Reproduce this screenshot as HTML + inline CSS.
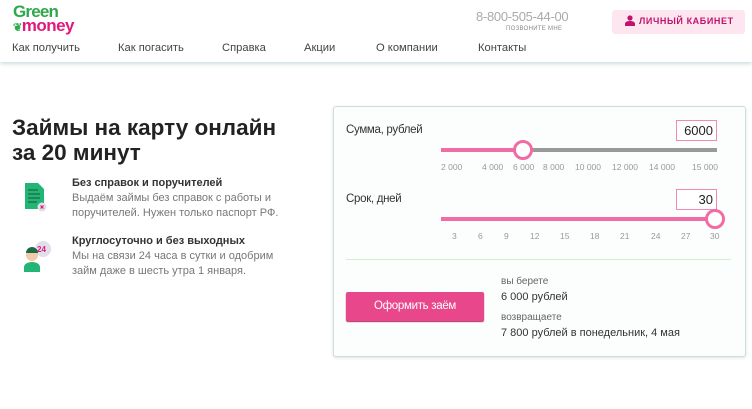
<!DOCTYPE html>
<html><head><meta charset="utf-8"><style>
*{margin:0;padding:0;box-sizing:border-box}
body{width:752px;height:409px;background:#fff;font-family:"Liberation Sans",sans-serif;position:relative;overflow:hidden;color:#333}
.a{position:absolute;white-space:nowrap}
.hdr{position:absolute;left:0;top:0;width:752px;height:62px;background:#fff;box-shadow:0 2px 4px rgba(150,180,190,.45)}
.nav{font-size:11.2px;color:#444;top:42px}
.tick{font-size:8.5px;color:#999;top:162px}
.tick2{font-size:8.5px;color:#999;top:231px}
.ft{font-size:11px;font-weight:bold;color:#333}
.fd{font-size:11px;color:#777;line-height:15px}
</style></head><body>
<div class="hdr"></div>
<div class="a" style="left:13px;top:4px;font-size:17px;font-weight:bold;color:#2ea84a;line-height:15px;letter-spacing:-0.8px">Green</div>
<div class="a" style="left:13px;top:18px;font-size:17px;font-weight:bold;color:#e0197d;line-height:16px;letter-spacing:-0.5px"><span style="color:#2ea84a;font-size:11px">❦</span>money</div>
<div class="a nav" style="left:12px">Как получить</div>
<div class="a nav" style="left:118px">Как погасить</div>
<div class="a nav" style="left:222px">Справка</div>
<div class="a nav" style="left:304px">Акции</div>
<div class="a nav" style="left:376px">О компании</div>
<div class="a nav" style="left:478px">Контакты</div>
<div class="a" style="left:476px;top:9px;font-size:13px;color:#aaa;letter-spacing:-0.3px">8-800-505-44-00</div>
<div class="a" style="left:506px;top:26px;font-size:6px;color:#888;letter-spacing:.3px">ПОЗВОНИТЕ МНЕ</div>
<div class="a" style="left:612px;top:10px;width:133px;height:24px;background:#fde6f0;border-radius:3px"></div>
<svg class="a" style="left:625px;top:15px" width="10" height="11" viewBox="0 0 10 11"><circle cx="5" cy="3" r="2.6" fill="#c0146b"/><path d="M0 11V9c0-2 2-3 5-3s5 1 5 3v2z" fill="#c0146b"/></svg>
<div class="a" style="left:639px;top:16px;font-size:9px;font-weight:bold;color:#c0146b;letter-spacing:.6px">ЛИЧНЫЙ КАБИНЕТ</div>

<div class="a" style="left:12px;top:115px;font-size:22.5px;font-weight:bold;color:#222;line-height:25px">Займы на карту онлайн<br>за 20 минут</div>

<svg class="a" style="left:24px;top:182px" width="24" height="30" viewBox="0 0 24 30"><path d="M1 1h13l6 6v20H1z" fill="#23b573"/><path d="M4 8h10M4 12h12M4 16h12M4 20h9" stroke="#1a6b4a" stroke-width="1.2"/><circle cx="18" cy="25" r="4.5" fill="#e0e0ea"/><path d="M16.5 23.5l3 3M19.5 23.5l-3 3" stroke="#e0197d" stroke-width="1.2"/></svg>
<div class="a ft" style="left:72px;top:177px">Без справок и поручителей</div>
<div class="a fd" style="left:72px;top:191px">Выдаём займы без справок с работы и<br>поручителей. Нужен только паспорт РФ.</div>
<svg class="a" style="left:22px;top:240px" width="30" height="32" viewBox="0 0 30 32"><circle cx="21" cy="9" r="8" fill="#e0e0ea"/><text x="15" y="12" font-size="8" font-weight="bold" fill="#e0197d" font-family="Liberation Sans">24</text><circle cx="10" cy="15" r="6" fill="#f3c9a6"/><path d="M4 13a6 6 0 0112 0" fill="#1a6b4a"/><path d="M2 32v-5c0-3 4-5 8-5s8 2 8 5v5z" fill="#23b573"/></svg>
<div class="a ft" style="left:72px;top:235px">Круглосуточно и без выходных</div>
<div class="a fd" style="left:72px;top:249px">Мы на связи 24 часа в сутки и одобрим<br>займ даже в шесть утра 1 января.</div>

<div class="a" style="left:333px;top:106px;width:413px;height:251px;border:1px solid #cfdde3;border-radius:3px;background:#fcfdfd;box-shadow:0 1px 3px rgba(0,0,0,.12)"></div>
<div class="a" style="left:346px;top:124px;font-size:11.5px;color:#333;letter-spacing:-0.3px">Сумма, рублей</div>
<div class="a" style="left:676px;top:120px;width:41px;height:21px;border:1px solid #f08ab5;background:#fff;font-size:13px;text-align:right;padding:2px 3px 0 0;color:#222">6000</div>
<div class="a" style="left:441px;top:148px;width:82px;height:4px;background:#f06ca5"></div>
<div class="a" style="left:523px;top:148px;width:194px;height:4px;background:#999"></div>
<div class="a" style="left:513px;top:140px;width:20px;height:20px;border:3px solid #f06ca5;border-radius:50%;background:#fff"></div>
<div class="a tick" style="left:441px">2 000</div><div class="a tick" style="left:482px">4 000</div><div class="a tick" style="left:513px">6 000</div><div class="a tick" style="left:543px">8 000</div><div class="a tick" style="left:575px">10 000</div><div class="a tick" style="left:612px">12 000</div><div class="a tick" style="left:649px">14 000</div><div class="a tick" style="left:692px">15 000</div>
<div class="a" style="left:346px;top:193px;font-size:11.5px;color:#333;letter-spacing:-0.3px">Срок, дней</div>
<div class="a" style="left:676px;top:189px;width:41px;height:21px;border:1px solid #f08ab5;background:#fff;font-size:13px;text-align:right;padding:2px 3px 0 0;color:#222">30</div>
<div class="a" style="left:441px;top:217px;width:274px;height:4px;background:#f06ca5"></div>
<div class="a" style="left:705px;top:209px;width:20px;height:20px;border:3px solid #f06ca5;border-radius:50%;background:#fff"></div>
<div class="a tick2" style="left:452px">3</div><div class="a tick2" style="left:478px">6</div><div class="a tick2" style="left:504px">9</div><div class="a tick2" style="left:530px">12</div><div class="a tick2" style="left:560px">15</div><div class="a tick2" style="left:590px">18</div><div class="a tick2" style="left:620px">21</div><div class="a tick2" style="left:651px">24</div><div class="a tick2" style="left:681px">27</div><div class="a tick2" style="left:710px">30</div>
<div class="a" style="left:346px;top:259px;width:385px;height:1px;background:#d5ecd0"></div>
<div class="a" style="left:346px;top:292px;width:138px;height:29px;background:#e8478b;border-radius:2px;box-shadow:0 1px 1px #b02a63;color:#fff;font-size:11.5px;text-align:center;line-height:29px;letter-spacing:-0.3px">Оформить заём</div>
<div class="a" style="left:501px;top:276px;font-size:10px;color:#666">вы берете</div>
<div class="a" style="left:501px;top:291px;font-size:11px;color:#333">6 000 рублей</div>
<div class="a" style="left:501px;top:312px;font-size:10px;color:#666">возвращаете</div>
<div class="a" style="left:501px;top:327px;font-size:11px;color:#333">7 800 рублей в понедельник, 4 мая</div>
</body></html>
